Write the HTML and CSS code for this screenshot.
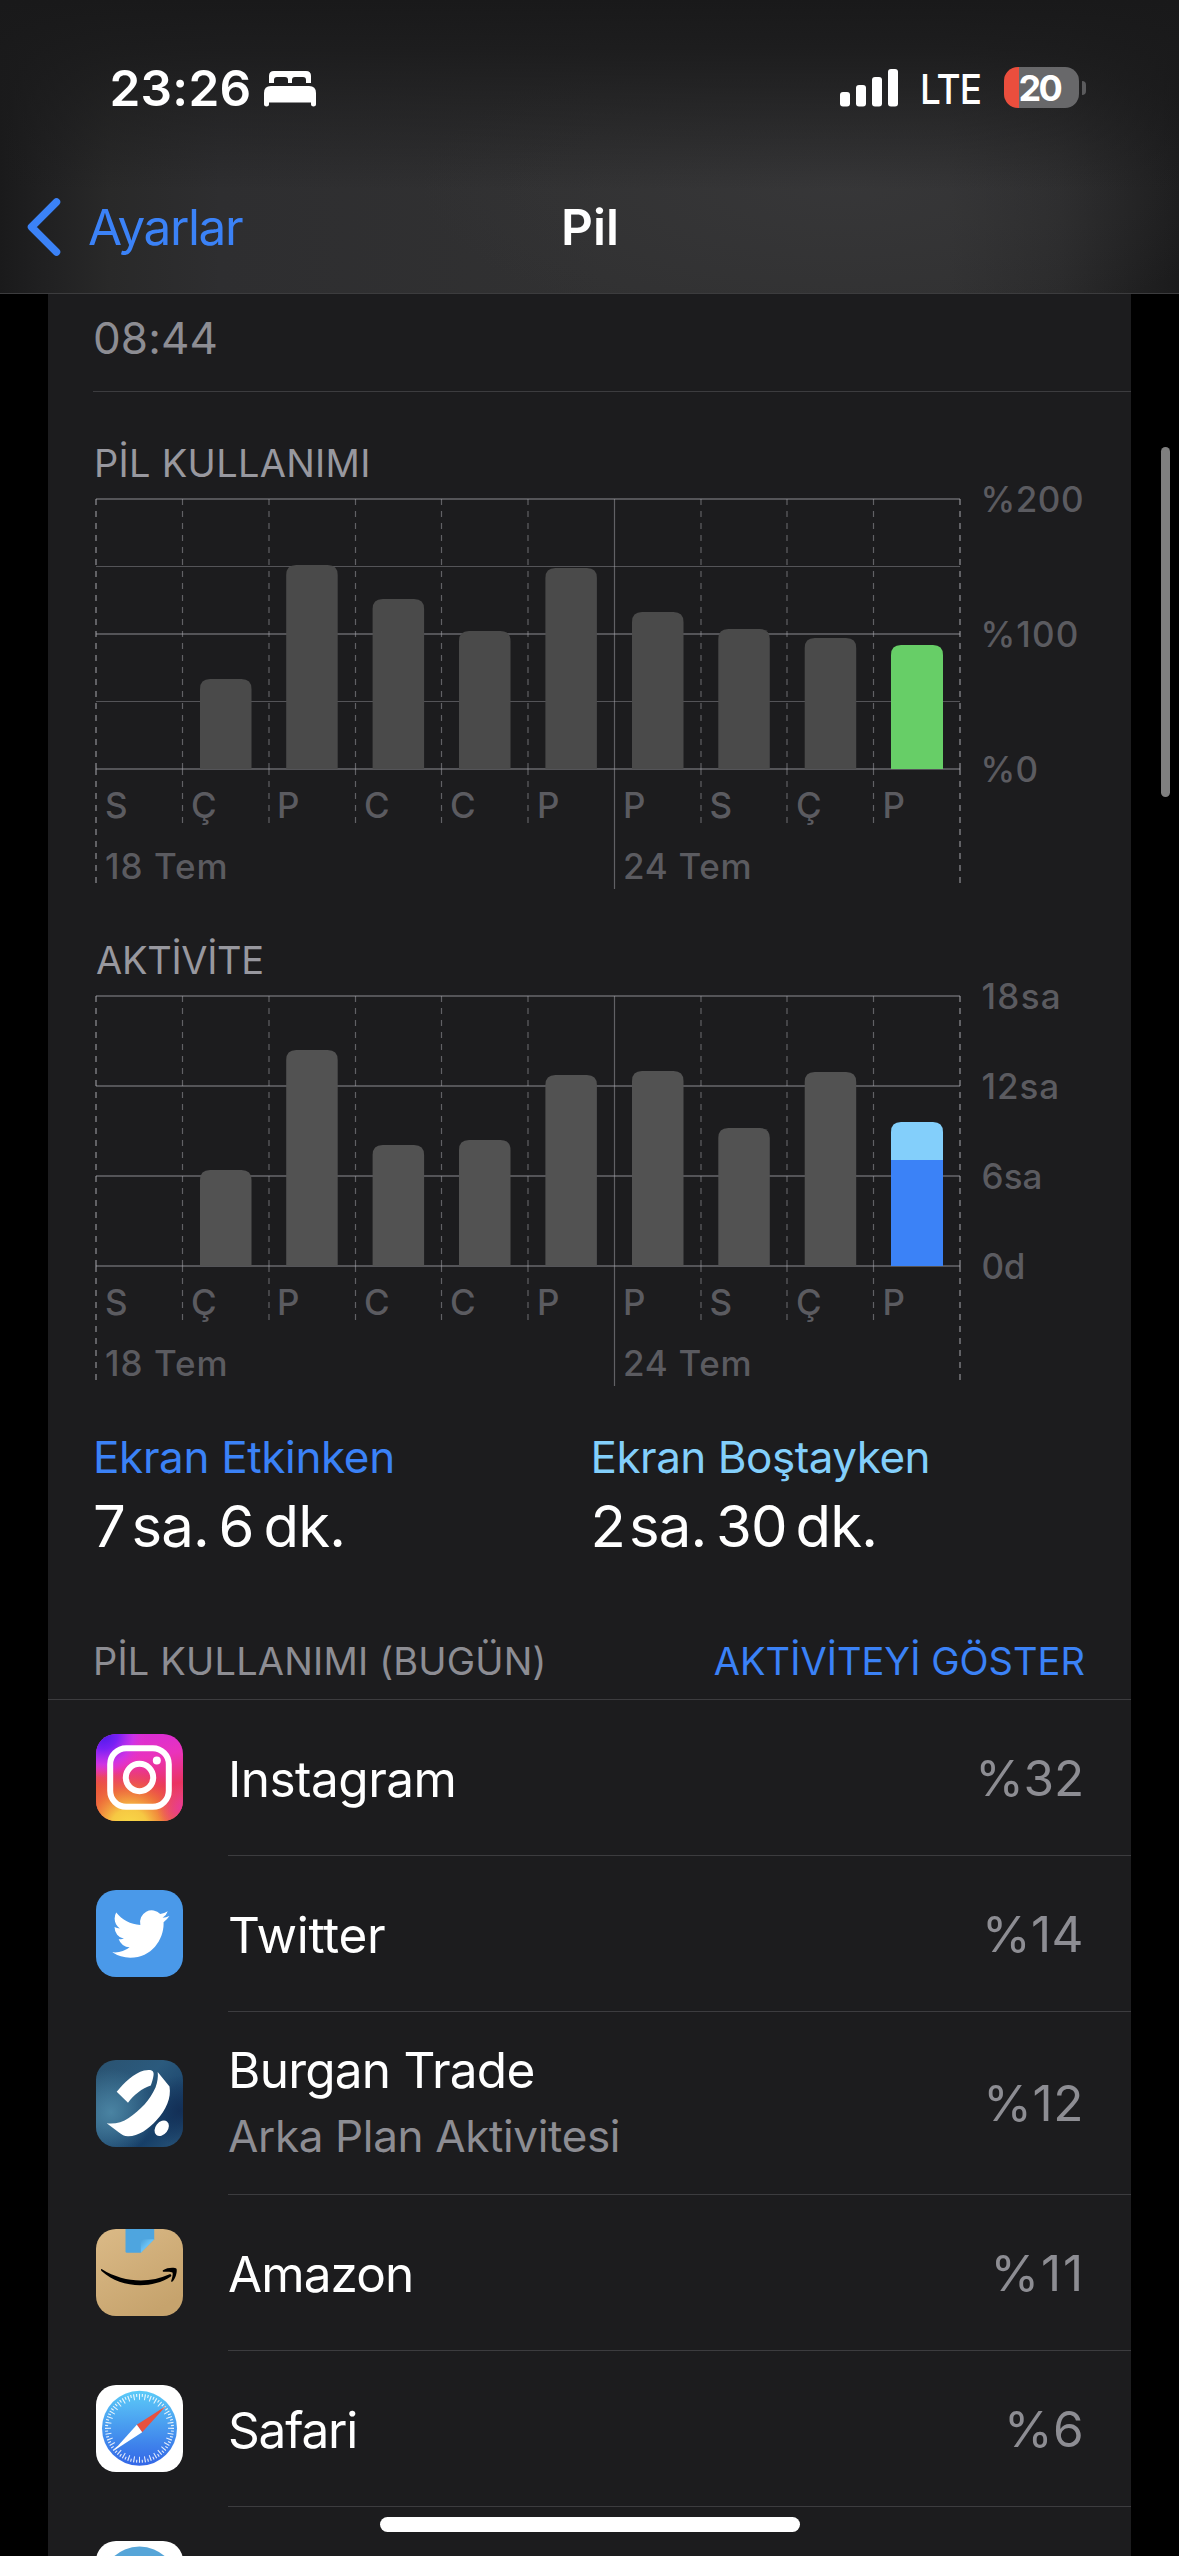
FILE: index.html
```html
<!DOCTYPE html>
<html lang="tr">
<head>
<meta charset="utf-8">
<title>Pil</title>
<link rel="stylesheet" href="styles.css">
</head>
<body>
<header class="header">
  <div class="status">
    <span class="clock">23:26</span>
    <svg class="bed" width="52" height="36" viewBox="0 0 52 36" fill="#fff">
      <path d="M5 12V5q0-5 5-5h32q5 0 5 5v7h-5V9q0-3-3-3h-8q-3 0-3 3v3h-4V9q0-3-3-3h-8q-3 0-3 3v3z"/>
      <path d="M0 33.500V22q0-7 7-7h38q7 0 7 7v11.500q0 2-2.500 2t-2.500-2V31.500H5v2q0 2-2.500 2T0 33.500z"/>
    </svg>
    <svg class="signal" width="58" height="38" viewBox="0 0 58 38" fill="#fff">
      <rect x="0" y="23" width="10" height="14.500" rx="3"/>
      <rect x="16" y="16" width="10" height="21.500" rx="3"/>
      <rect x="32" y="8" width="10" height="29.500" rx="3"/>
      <rect x="48" y="0" width="10" height="37.500" rx="3"/>
    </svg>
    <span class="carrier">LTE</span>
    <span class="battery">20</span>
    <span class="battery-cap"></span>
  </div>
  <nav class="nav">
    <a class="back">
      <svg width="34" height="58" viewBox="0 0 34 58" fill="none" stroke="#3b82f7" stroke-width="7.500" stroke-linecap="round" stroke-linejoin="round"><path d="M29.500 4 4.500 29l25 25"/></svg>
      <span class="back-label">Ayarlar</span>
    </a>
    <h1 class="title">Pil</h1>
    <span></span>
  </nav>
</header>

<main class="card">
  <p class="last-charge">08:44</p>

  <section class="chart">
    <h2 class="chart-title usage-title">PİL KULLANIMI</h2>
    <svg class="plot" width="1083" height="410" viewBox="48 0 1083 410">
      <g class="rows">
        <path d="M96 10h864M96 145h864M96 280h864" stroke-width="2"/>
        <path d="M96 77.500h864M96 212.500h864" stroke-width="1"/>
      </g>
      <g class="dashes">
        <path d="M182.500 10v270M269 10v270M355.500 10v270M441.500 10v270M528 10v270M701 10v270M787 10v270M873.500 10v270"/>
        <path d="M182.500 280v54M269 280v54M355.500 280v54M441.500 280v54M528 280v54M701 280v54M787 280v54M873.500 280v54"/>
        <path class="edge" d="M96 10v270M960 10v270"/>
        <path class="edge" d="M96 280v114M960 280v114"/>
      </g>
      <path class="week" d="M614.500 10v390"/>
      <g fill="#4a4a4a">
        <path d="M200 280V200q0-10 10-10h31.500q10 0 10 10v80z"/>
        <path d="M286.200 280V86q0-10 10-10h31.500q10 0 10 10v194z"/>
        <path d="M372.600 280V120q0-10 10-10h31.500q10 0 10 10v160z"/>
        <path d="M459 280V152q0-10 10-10h31.500q10 0 10 10v128z"/>
        <path d="M545.400 280V89q0-10 10-10h31.500q10 0 10 10v191z"/>
        <path d="M632 280V133q0-10 10-10h31.500q10 0 10 10v147z"/>
        <path d="M718.300 280V150q0-10 10-10h31.500q10 0 10 10v130z"/>
        <path d="M804.700 280V159q0-10 10-10h31.500q10 0 10 10v121z"/>
        <path fill="#67ce67" d="M891 280V166q0-10 10-10h32q10 0 10 10v114z"/>
      </g>
      <g class="ticks">
        <text x="105" y="329">S</text><text x="191" y="329">Ç</text><text x="277" y="329">P</text><text x="364" y="329">C</text><text x="450" y="329">C</text><text x="537" y="329">P</text><text x="623" y="329">P</text><text x="709.500" y="329">S</text><text x="796" y="329">Ç</text><text x="882.500" y="329">P</text>
        <text x="105" y="390" letter-spacing="1">18 Tem</text><text x="623" y="390" letter-spacing=".7">24 Tem</text>
        <text x="980.500" y="23" letter-spacing=".5">%200</text><text x="980.500" y="158" letter-spacing="1.100">%100</text><text x="980.500" y="293" letter-spacing=".3">%0</text>
      </g>
    </svg>
  </section>

  <section class="chart chart-activity">
    <h2 class="chart-title activity-title">AKTİVİTE</h2>
    <svg class="plot" width="1083" height="410" viewBox="48 0 1083 410">
      <g class="rows">
        <path d="M96 10h864M96 100h864M96 190h864M96 280h864" stroke-width="2"/>
      </g>
      <g class="dashes">
        <path d="M182.500 10v270M269 10v270M355.500 10v270M441.500 10v270M528 10v270M701 10v270M787 10v270M873.500 10v270"/>
        <path d="M182.500 280v54M269 280v54M355.500 280v54M441.500 280v54M528 280v54M701 280v54M787 280v54M873.500 280v54"/>
        <path class="edge" d="M96 10v270M960 10v270"/>
        <path class="edge" d="M96 280v114M960 280v114"/>
      </g>
      <path class="week" d="M614.500 10v390"/>
      <g fill="#525252">
        <path d="M200 280V194q0-10 10-10h31.500q10 0 10 10v86z"/>
        <path d="M286.200 280V74q0-10 10-10h31.500q10 0 10 10v206z"/>
        <path d="M372.600 280V169q0-10 10-10h31.500q10 0 10 10v111z"/>
        <path d="M459 280V164q0-10 10-10h31.500q10 0 10 10v116z"/>
        <path d="M545.400 280V99q0-10 10-10h31.500q10 0 10 10v181z"/>
        <path d="M632 280V95q0-10 10-10h31.500q10 0 10 10v185z"/>
        <path d="M718.300 280V152q0-10 10-10h31.500q10 0 10 10v128z"/>
        <path d="M804.700 280V96q0-10 10-10h31.500q10 0 10 10v184z"/>
        <path fill="#83cffb" d="M891 174V146q0-10 10-10h32q10 0 10 10v28z"/>
        <path fill="#3b82f7" d="M891 174h52v106h-52z"/>
      </g>
      <g class="ticks">
        <text x="105" y="329">S</text><text x="191" y="329">Ç</text><text x="277" y="329">P</text><text x="364" y="329">C</text><text x="450" y="329">C</text><text x="537" y="329">P</text><text x="623" y="329">P</text><text x="709.500" y="329">S</text><text x="796" y="329">Ç</text><text x="882.500" y="329">P</text>
        <text x="105" y="390" letter-spacing="1">18 Tem</text><text x="623" y="390" letter-spacing=".7">24 Tem</text>
        <text x="981.500" y="23" letter-spacing="1.300">18sa</text><text x="981.500" y="113" letter-spacing=".9">12sa</text><text x="981.500" y="203" letter-spacing=".1">6sa</text><text x="981.500" y="293" letter-spacing="-.3">0d</text>
      </g>
    </svg>
  </section>

  <section class="totals">
    <div class="total">
      <p class="total-label active">Ekran Etkinken</p>
      <p class="total-value"><span class="unit u7">7</span><span class="unit sa">sa.</span><span class="unit u6">6</span><span class="unit">dk.</span></p>
    </div>
    <div class="total">
      <p class="total-label idle">Ekran Boştayken</p>
      <p class="total-value"><span class="unit u2">2</span><span class="unit sa">sa.</span><span class="unit u30">30</span><span class="unit">dk.</span></p>
    </div>
  </section>

  <div class="list-head">
    <span class="list-title">PİL KULLANIMI (BUGÜN)</span>
    <a class="toggle">AKTİVİTEYİ GÖSTER</a>
  </div>

  <ul class="apps">
    <li class="app">
      <svg class="icon" width="87" height="87" viewBox="0 0 87 87">
        <defs>
          <linearGradient id="ig0" x1=".4" y1="0" x2=".6" y2="1"><stop offset="0" stop-color="#d82cd8"/><stop offset=".3" stop-color="#ea33bc"/><stop offset=".65" stop-color="#ea3460"/><stop offset="1" stop-color="#ee5a3c"/></linearGradient>
          <radialGradient id="ig1" cx=".38" cy="1.080" r=".72"><stop offset="0" stop-color="#f9dc48"/><stop offset=".3" stop-color="#f6c843"/><stop offset=".6" stop-color="#ef7a38" stop-opacity=".85"/><stop offset="1" stop-color="#ea4040" stop-opacity="0"/></radialGradient>
          <radialGradient id="ig2" cx=".08" cy="0" r=".5"><stop offset="0" stop-color="#4a1ae8"/><stop offset=".35" stop-color="#7a20f5"/><stop offset=".7" stop-color="#c634f0" stop-opacity=".75"/><stop offset="1" stop-color="#e834c8" stop-opacity="0"/></radialGradient>
          <radialGradient id="ig3" cx="0" cy=".64" r=".32"><stop offset="0" stop-color="#ea5a34"/><stop offset="1" stop-color="#ea5a34" stop-opacity="0"/></radialGradient>
          <radialGradient id="ig4" cx="1" cy=".85" r=".3"><stop offset="0" stop-color="#e8389c"/><stop offset="1" stop-color="#e8389c" stop-opacity="0"/></radialGradient>
        </defs>
        <rect width="87" height="87" rx="20" fill="url(#ig0)"/>
        <rect width="87" height="87" rx="20" fill="url(#ig3)"/>
        <rect width="87" height="87" rx="20" fill="url(#ig1)"/>
        <rect width="87" height="87" rx="20" fill="url(#ig2)"/>
        <rect width="87" height="87" rx="20" fill="url(#ig4)"/>
        <g fill="none" stroke="#fff" stroke-width="6"><rect x="14.200" y="14.200" width="58.600" height="58.600" rx="16"/><circle cx="43.500" cy="43.500" r="13.700"/></g>
        <circle cx="60.800" cy="26.400" r="4" fill="#fff"/>
      </svg>
      <div class="app-main"><div class="names"><span class="name instagram">Instagram</span></div><span class="share s32">%32</span></div>
    </li>
    <li class="app">
      <svg class="icon" width="87" height="87" viewBox="0 0 87 87">
        <rect width="87" height="87" rx="20" fill="#4a99e9"/>
        <path fill="#fff" transform="translate(16.300 14.800) scale(2.380 2.430)" d="M23.953 4.570a10 10 0 01-2.825.775 4.958 4.958 0 002.163-2.723c-.951.555-2.005.959-3.127 1.184a4.920 4.920 0 00-8.384 4.482C7.690 8.095 4.067 6.130 1.640 3.162a4.822 4.822 0 00-.666 2.475c0 1.710.87 3.213 2.188 4.096a4.904 4.904 0 01-2.228-.616v.06a4.923 4.923 0 003.946 4.827 4.996 4.996 0 01-2.212.085 4.936 4.936 0 004.604 3.417 9.867 9.867 0 01-6.102 2.105c-.39 0-.779-.023-1.170-.067a13.995 13.995 0 007.557 2.209c9.053 0 13.998-7.496 13.998-13.985 0-.21 0-.42-.015-.63A9.935 9.935 0 0024 4.590z"/>
      </svg>
      <div class="app-main"><div class="names"><span class="name twitter">Twitter</span></div><span class="share s14">%14</span></div>
    </li>
    <li class="app tall">
      <svg class="icon" width="87" height="87" viewBox="0 0 87 87">
        <defs>
          <linearGradient id="bg0" x1="0" y1="0" x2=".9" y2="1"><stop offset="0" stop-color="#2a5270"/><stop offset=".4" stop-color="#2b5a7d"/><stop offset=".8" stop-color="#173f68"/><stop offset="1" stop-color="#255075"/></linearGradient>
          <radialGradient id="bg1" cx=".17" cy=".6" r=".5"><stop offset="0" stop-color="#4a83a2"/><stop offset="1" stop-color="#4a83a2" stop-opacity="0"/></radialGradient>
          <radialGradient id="bg2" cx=".97" cy=".58" r=".4"><stop offset="0" stop-color="#132f56"/><stop offset="1" stop-color="#132f56" stop-opacity="0"/></radialGradient>
        </defs>
        <rect width="87" height="87" rx="20" fill="url(#bg0)"/>
        <rect width="87" height="87" rx="20" fill="url(#bg1)"/>
        <rect width="87" height="87" rx="20" fill="url(#bg2)"/>
        <g fill="#fff">
          <path d="M20.700 31.700C28 23 38 13 48 10.500c7-1.500 10.500 0 9.500 5-.5 3.500-1.500 6.500-2.700 10C46 28 38 35 32 42.700z"/>
          <path d="M61.700 12 73.500 26.500C75.500 38 70 50 60.700 60 52 69.500 42 76.500 32 76.300c-4-.3-6-1.500-9-3.800L10.700 63.300c8 .9 15.500-.8 22-5.300C44 50.500 54 40 59.500 27.500c2-5.500 2.800-10.500 2.200-15.500z"/>
          <ellipse cx="65.700" cy="68.200" rx="6.200" ry="8.600" transform="rotate(38 65.700 68.200)"/>
        </g>
      </svg>
      <div class="app-main"><div class="names"><span class="name burgan">Burgan Trade</span><span class="note">Arka Plan Aktivitesi</span></div><span class="share s12">%12</span></div>
    </li>
    <li class="app">
      <svg class="icon" width="87" height="87" viewBox="0 0 87 87">
        <defs>
          <linearGradient id="am0" x1="0" y1="0" x2=".6" y2="1"><stop offset="0" stop-color="#dbba87"/><stop offset="1" stop-color="#c6a36d"/></linearGradient>
          <linearGradient id="am1" x1="0" y1="0" x2="1" y2="1"><stop offset="0" stop-color="#4b9fd8"/><stop offset=".5" stop-color="#6cc5f8"/><stop offset="1" stop-color="#5cb6ee"/></linearGradient>
        </defs>
        <rect width="87" height="87" rx="20" fill="url(#am0)"/>
        <path fill="#4ea5df" d="M29.500 0h28.700v10.300L44.800 23.700H31q-1.500 0-1.500-1.500z"/>
        <path fill="url(#am1)" d="M44.800 23.700V11.800q0-1.500 1.500-1.500h11.900z"/>
        <path d="M6 40.200c21 13.300 47 14.300 67 5.300 1.800-.8 3.300.8 1.500 2.200C55 60.500 24 59 5.500 42c-1-1-.5-2.300.5-1.800z"/>
        <path d="M67 41.200c4-3 12-3.200 13.500-1.500.9 2.200-.6 9.500-4 12.800-.8.700-1.700.3-1.300-.8 1-2.500 2-7 1.200-8.200-1-1-5.200-1-8.200-.7-1.300.2-2-.8-1.200-1.600z"/>
      </svg>
      <div class="app-main"><div class="names"><span class="name amazon">Amazon</span></div><span class="share s11">%11</span></div>
    </li>
    <li class="app">
      <svg class="icon" width="87" height="87" viewBox="0 0 87 87">
        <defs><linearGradient id="sf0" x1="0" y1="0" x2="0" y2="1"><stop offset="0" stop-color="#5ccbf8"/><stop offset="1" stop-color="#3366e6"/></linearGradient></defs>
        <rect width="87" height="87" rx="20" fill="#fff"/>
        <circle cx="43.500" cy="43.300" r="37.500" fill="url(#sf0)"/>
        <g fill="none" stroke="#fff" opacity=".85">
          <circle cx="43.500" cy="43.300" r="31.500" stroke-width="6" pathLength="36" stroke-dasharray=".2 .8" stroke-dashoffset=".1"/>
          <circle cx="43.500" cy="43.300" r="33" stroke-width="3" pathLength="36" stroke-dasharray=".2 .8" stroke-dashoffset=".6"/>
        </g>
        <path fill="#e8513f" d="m70 21-23.800 26.300-5.400-7.600z"/>
        <path fill="#fff" d="m17.300 66 23.500-26.300 5.400 7.600z"/>
      </svg>
      <div class="app-main"><div class="names"><span class="name safari">Safari</span></div><span class="share s6">%6</span></div>
    </li>
    <li class="app">
      <svg class="icon" width="87" height="87" viewBox="0 0 87 87">
        <rect width="87" height="87" rx="20" fill="#fff"/>
        <circle cx="43.500" cy="43.500" r="38" fill="#56a5d8"/>
      </svg>
      <div class="app-main"></div>
    </li>
  </ul>
</main>
<div class="scrollbar"></div>
<div class="home-bar"></div>
</body>
</html>
```
FILE: styles.css
```css
* { box-sizing: border-box; margin: 0; padding: 0; }
html, body { width: 1179px; height: 2556px; overflow: hidden; background: #000; }
body {
  position: relative;
  color: #fff;
  font-family: Inter, "Noto Sans", sans-serif;
  font-feature-settings: "calt" 0;
}

.header {
  height: 294px;
  border-bottom: 1px solid #3c3c3e;
  background:
    linear-gradient(#19191a 0, rgba(26, 26, 27, .86) 50px, rgba(28, 28, 30, 0) 190px),
    radial-gradient(420px 150px at 840px 185px, rgba(60, 60, 62, .5), rgba(60, 60, 62, 0)),
    linear-gradient(90deg, #1a1a1b 0, #212122 50px, #292929 110px, #2e2e30 220px, #313132 600px, #313132 950px, #2a2a2b 1060px, #212122 1130px, #1b1b1c 1179px);
}
.status { display: flex; align-items: flex-start; height: 176px; padding-left: 109.5px; }
.clock { width: 154.5px; margin-top: 58px; font-size: 49.5px; font-weight: 600; line-height: 60px; letter-spacing: .26px; }
.bed { margin-top: 71px; }
.signal { margin: 69px 0 0 524px; }
.carrier { width: 81px; margin: 64px 0 0 21.5px; font-size: 41.5px; font-weight: 500; line-height: 50px; letter-spacing: -1px; transform: scaleX(.89); transform-origin: 0 50%; }
.battery {
  width: 75px; height: 41px; margin: 67px 0 0 3.5px; padding-left: 14.5px;
  border-radius: 14px;
  background: linear-gradient(90deg, #eb4e3d 15px, #68686a 15px);
  font-size: 36px; font-weight: 700; line-height: 42px; letter-spacing: -2.6px;
}
.battery-cap { width: 4px; height: 14px; margin: 81px 0 0 3px; border-radius: 0 4px 4px 0; background: #5b5b5d; }

.nav { display: grid; grid-template-columns: 1fr auto 1fr; align-items: center; height: 101px; padding: 0 27px; }
.back { display: flex; align-items: center; gap: 27px; color: #3b82f7; }
.back-label { font-size: 49.5px; line-height: 60px; letter-spacing: -1.39px; }
.title { padding-left: 1px; font-size: 49.5px; font-weight: 600; line-height: 60px; }

.card { height: 2262px; margin: 0 48px; overflow: hidden; background: #1c1c1e; }
.last-charge { height: 98px; margin-left: 45px; padding: 14px 0 0; border-bottom: 1px solid #3c3c3f; color: #8d8d93; font-size: 44px; line-height: 60px; letter-spacing: .1px; }

.chart { padding-top: 46px; }
.chart-activity { padding-top: 36px; }
.chart-title { margin-bottom: 1px; padding-left: 46px; color: #98989f; font-size: 38px; font-weight: 400; line-height: 50px; }
.usage-title { letter-spacing: .28px; }
.activity-title { padding-left: 48px; letter-spacing: -.3px; }
.plot { display: block; overflow: visible; }
.rows, .dashes, .week { fill: none; stroke: rgba(150, 150, 158, .46); }
.dashes { stroke-width: 1.2; stroke-dasharray: 6 6; stroke: rgba(165, 165, 172, .5); }
.dashes .edge { stroke-width: 2; }
.week { stroke-width: 1.2; stroke: rgba(165, 165, 172, .5); }
.ticks { fill: #5b5b60; font-size: 35px; font-weight: 500; }

.totals { display: grid; grid-template-columns: 497.5px 1fr; padding: 34px 0 0 45px; }
.total-label { font-size: 44px; line-height: 54px; letter-spacing: -.35px; }
.total-label.active { color: #3b82f7; }
.total-label.idle { color: #83cffb; letter-spacing: -.5px; }
.total-value { display: flex; height: 70px; margin-top: 7px; font-size: 58px; line-height: 70px; letter-spacing: -.8px; }
.u7 { width: 38.5px; }
.sa { width: 87px; }
.u6 { width: 45px; }
.u2 { width: 38.5px; }
.u30 { width: 79.5px; }

.list-head { display: flex; justify-content: space-between; height: 139px; padding: 75px 46px 0 45px; border-bottom: 1px solid #3c3c3f; font-size: 38px; line-height: 50px; }
.list-title { color: #8d8d93; letter-spacing: .18px; }
.toggle { color: #3b82f7; letter-spacing: .04px; }

.apps { list-style: none; }
.app { display: flex; height: 156px; padding-left: 48px; }
.app.tall { height: 183px; }
.icon { flex: none; align-self: flex-start; margin-top: 34px; }
.tall .icon { margin-top: 48px; }
.app-main { display: flex; flex: 1; align-items: center; justify-content: space-between; margin-left: 45px; padding-right: 47px; border-bottom: 1px solid #3c3c3f; }
.names { display: flex; flex-direction: column; padding-top: 2px; }
.name { font-size: 49.5px; line-height: 62px; }
.note { margin-top: 4px; padding-bottom: 2px; color: #8d8d93; font-size: 44px; line-height: 62px; letter-spacing: -.35px; }
.instagram { letter-spacing: -.52px; }
.twitter { letter-spacing: -.32px; }
.burgan { letter-spacing: -.75px; }
.amazon { letter-spacing: -.92px; }
.safari { letter-spacing: -1.2px; }
.share { color: #8d8d93; font-size: 49.5px; line-height: 62px; letter-spacing: -.2px; }
.s14 { letter-spacing: .4px; }
.s12 { letter-spacing: .6px; }
.s11 { letter-spacing: 1.9px; margin-right: -1px; }
.s6 { letter-spacing: .4px; }

.scrollbar { position: absolute; top: 447px; right: 9px; width: 9px; height: 350px; border-radius: 5px; background: #7f7f7f; }
.home-bar { position: absolute; top: 2517px; left: 380px; width: 420px; height: 15px; border-radius: 8px; background: #fff; }
```
